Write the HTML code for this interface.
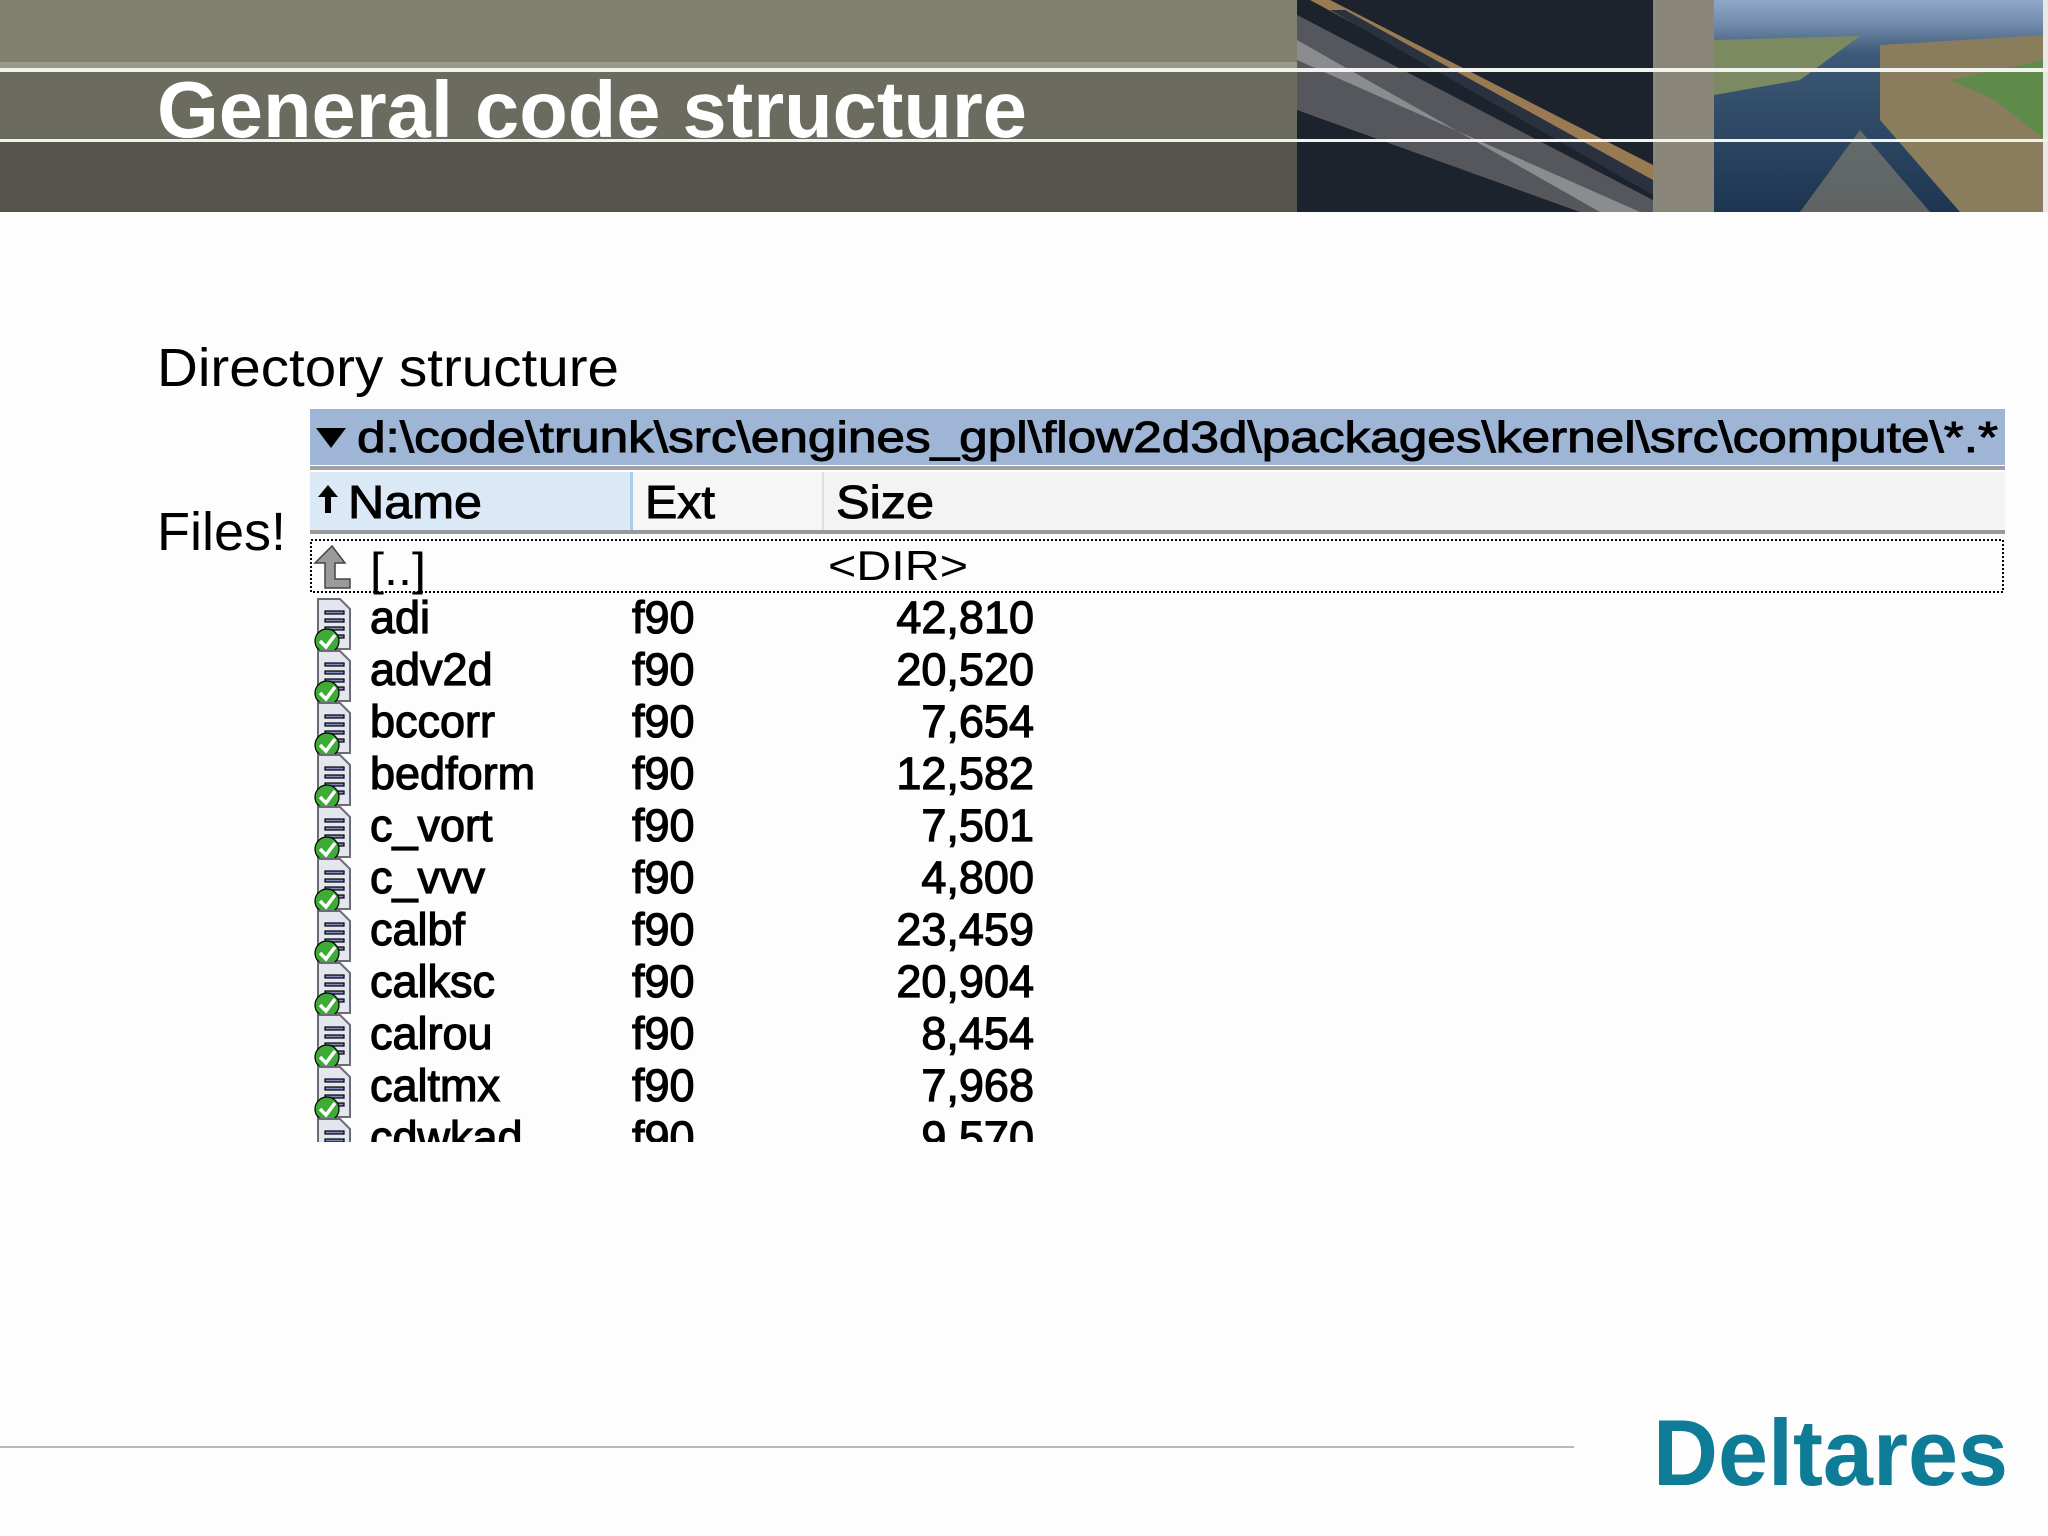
<!DOCTYPE html>
<html><head><meta charset="utf-8"><style>
html,body{margin:0;padding:0;background:#fdfdfd;}
svg{display:block;}
text{font-family:"Liberation Sans",sans-serif;}
</style></head><body>
<svg width="2048" height="1536" viewBox="0 0 2048 1536" xmlns="http://www.w3.org/2000/svg">
<defs>
<linearGradient id="sky" x1="0" y1="0" x2="0" y2="1">
<stop offset="0" stop-color="#8fa8c8"/><stop offset="0.12" stop-color="#6f89a8"/><stop offset="0.25" stop-color="#3d5a78"/><stop offset="1" stop-color="#1d3550"/>
</linearGradient>
<clipPath id="list"><rect x="300" y="580" width="800" height="562"/></clipPath>
<clipPath id="br"><rect x="1297" y="0" width="356" height="212"/></clipPath>
<g id="ficon">
<path d="M318 -34 h22 l10 10 v40 h-32z" fill="#e4e6ee" stroke="#6a6a78" stroke-width="2"/>
<rect x="325" y="-22" width="19" height="3" fill="#7f88c0"/><rect x="325" y="-14" width="19" height="3" fill="#7f88c0"/><rect x="325" y="-6" width="19" height="3" fill="#7f88c0"/><rect x="325" y="2" width="19" height="3" fill="#7f88c0"/>
<circle cx="327" cy="8" r="12" fill="#3faa36"/>
<path d="M320 8 l6 6 l9 -12" fill="none" stroke="#fff" stroke-width="3.5"/>
</g>
</defs>
<rect x="0" y="0" width="2048" height="68" fill="#81816f"/>
<rect x="0" y="62" width="2048" height="6" fill="#9a9a8c"/>
<rect x="0" y="72" width="2048" height="68" fill="#6b6b60"/>
<rect x="0" y="142" width="2048" height="70" fill="#55554d"/>
<rect x="1297" y="0" width="356" height="212" fill="#1c232d"/>
<g clip-path="url(#br)">
<polygon points="1297,15 1297,110 1580,212 1653,212 1653,200" fill="#55575c"/>
<polygon points="1297,40 1297,60 1640,212 1600,212" fill="#8a8c90"/>
<polygon points="1310,0 1330,0 1653,165 1653,185" fill="#9a7a52"/>
<polygon points="1330,10 1345,10 1653,180 1653,195" fill="#2a3240"/>
</g>
<rect x="1653" y="0" width="61" height="212" fill="#8a867a"/>
<rect x="1714" y="0" width="331" height="212" fill="url(#sky)"/>
<polygon points="1714,40 1860,36 1800,80 1714,95" fill="#7b8a60"/>
<polygon points="1880,45 2045,35 2045,212 1960,212 1880,120" fill="#8a7d5e"/>
<polygon points="1950,80 2045,60 2045,140 1995,100" fill="#5f8a4a"/>
<polygon points="1800,212 1860,130 1930,212" fill="#8a8470" opacity="0.6"/>
<rect x="2043" y="0" width="5" height="212" fill="#e8e8e4"/>
<rect x="0" y="68" width="2048" height="4" fill="#f2f2ee"/>
<rect x="0" y="139" width="2048" height="3" fill="#f2f2ee"/>
<text x="157" y="137" font-size="80" font-weight="bold" fill="#fff" textLength="870" lengthAdjust="spacingAndGlyphs">General code structure</text>
<text x="157" y="386" font-size="54" fill="#000" textLength="462" lengthAdjust="spacingAndGlyphs">Directory structure</text>
<text x="157" y="550" font-size="54" fill="#000">Files!</text>
<rect x="310" y="409" width="1695" height="56" fill="#9fb5d6"/>
<polygon points="316,428 346,428 331,448" fill="#000"/>
<text x="357" y="452" font-size="44" fill="#000" textLength="1641" lengthAdjust="spacingAndGlyphs" stroke="#000" stroke-width="1">d:\code\trunk\src\engines_gpl\flow2d3d\packages\kernel\src\compute\*.*</text>
<rect x="310" y="466" width="1695" height="4" fill="#a0a0a0"/>
<rect x="310" y="472" width="322" height="58" fill="#dbe9f7"/>
<rect x="632" y="472" width="190" height="58" fill="#f6f6f6"/>
<rect x="822" y="472" width="1183" height="58" fill="#f3f3f3"/>
<rect x="630" y="472" width="3" height="58" fill="#a8cde8"/>
<rect x="822" y="472" width="2" height="58" fill="#e0e0e0"/>
<rect x="310" y="530" width="1695" height="4" fill="#9a9a9a"/>
<path d="M328 485 l-10 12 h7 v16 h6 v-16 h7z" fill="#000"/>
<text x="348" y="518" font-size="46" fill="#000" stroke="#000" stroke-width="1" textLength="134" lengthAdjust="spacingAndGlyphs">Name</text>
<text x="645" y="518" font-size="46" fill="#000" stroke="#000" stroke-width="1" textLength="70" lengthAdjust="spacingAndGlyphs">Ext</text>
<text x="836" y="518" font-size="46" fill="#000" stroke="#000" stroke-width="1" textLength="98" lengthAdjust="spacingAndGlyphs">Size</text>
<rect x="311" y="540" width="1692" height="52" fill="none" stroke="#000" stroke-width="2" stroke-dasharray="2,2"/>
<path d="M332 546 l-17 17 h10 v25 h25 v-9 h-15 v-16 h10z" fill="#9a9a9a" stroke="#444" stroke-width="1.5"/>
<text x="370" y="585" font-size="46" fill="#000" textLength="56" lengthAdjust="spacingAndGlyphs">[..]</text>
<text x="828" y="580" font-size="42" fill="#000" textLength="140" lengthAdjust="spacingAndGlyphs">&lt;DIR&gt;</text>
<g clip-path="url(#list)" font-size="45" fill="#000" stroke="#000" stroke-width="1.2">
<g transform="translate(0,633)"><use href="#ficon"/><text x="370" y="0">adi</text><text x="632" y="0">f90</text><text x="1034" y="0" text-anchor="end">42,810</text></g>
<g transform="translate(0,685)"><use href="#ficon"/><text x="370" y="0">adv2d</text><text x="632" y="0">f90</text><text x="1034" y="0" text-anchor="end">20,520</text></g>
<g transform="translate(0,737)"><use href="#ficon"/><text x="370" y="0">bccorr</text><text x="632" y="0">f90</text><text x="1034" y="0" text-anchor="end">7,654</text></g>
<g transform="translate(0,789)"><use href="#ficon"/><text x="370" y="0">bedform</text><text x="632" y="0">f90</text><text x="1034" y="0" text-anchor="end">12,582</text></g>
<g transform="translate(0,841)"><use href="#ficon"/><text x="370" y="0">c_vort</text><text x="632" y="0">f90</text><text x="1034" y="0" text-anchor="end">7,501</text></g>
<g transform="translate(0,893)"><use href="#ficon"/><text x="370" y="0">c_vvv</text><text x="632" y="0">f90</text><text x="1034" y="0" text-anchor="end">4,800</text></g>
<g transform="translate(0,945)"><use href="#ficon"/><text x="370" y="0">calbf</text><text x="632" y="0">f90</text><text x="1034" y="0" text-anchor="end">23,459</text></g>
<g transform="translate(0,997)"><use href="#ficon"/><text x="370" y="0">calksc</text><text x="632" y="0">f90</text><text x="1034" y="0" text-anchor="end">20,904</text></g>
<g transform="translate(0,1049)"><use href="#ficon"/><text x="370" y="0">calrou</text><text x="632" y="0">f90</text><text x="1034" y="0" text-anchor="end">8,454</text></g>
<g transform="translate(0,1101)"><use href="#ficon"/><text x="370" y="0">caltmx</text><text x="632" y="0">f90</text><text x="1034" y="0" text-anchor="end">7,968</text></g>
<g transform="translate(0,1153)"><use href="#ficon"/><text x="370" y="0">cdwkad</text><text x="632" y="0">f90</text><text x="1034" y="0" text-anchor="end">9,570</text></g>
</g>
<rect x="0" y="1446" width="1574" height="2" fill="#b8b8b8"/>
<text x="1653" y="1485" font-size="94" font-weight="bold" fill="#0f7c97" textLength="355" lengthAdjust="spacingAndGlyphs">Deltares</text>
</svg>
</body></html>
